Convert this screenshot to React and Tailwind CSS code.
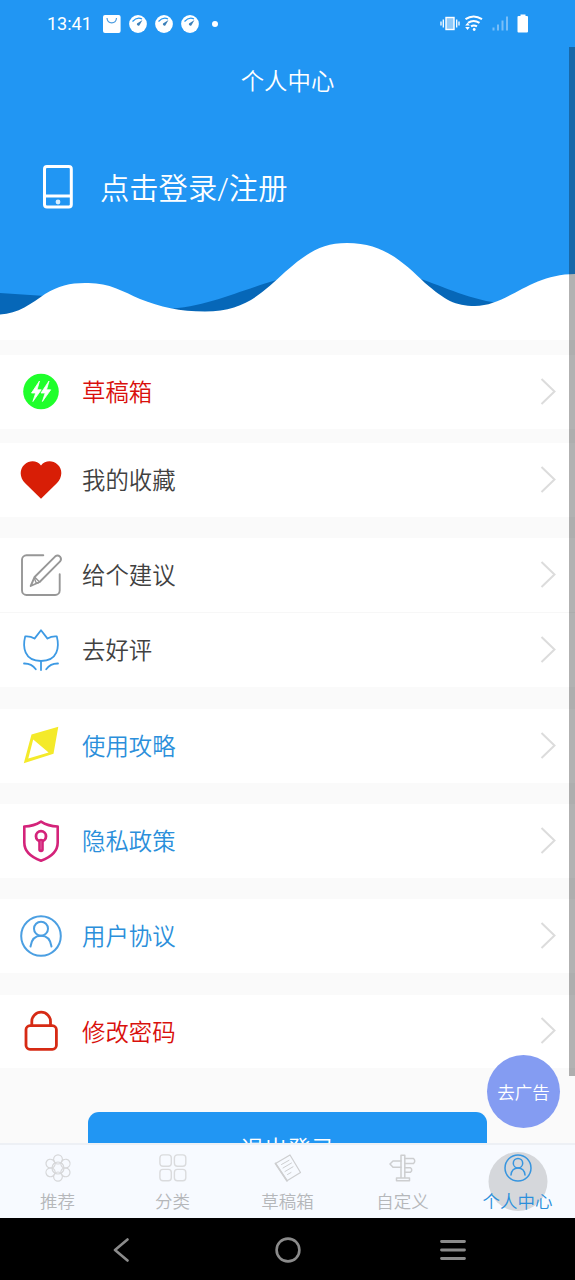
import React, { useState } from 'react';

const FONT = "font-['Roboto','Noto_Sans_CJK_SC',sans-serif]";

const line = { fill: 'none', strokeLinecap: 'round', strokeLinejoin: 'round' };

/* ---- Menu icons, all on a 48px box ---- */
const BoltIcon = () => (
  <>
    <circle cx="24" cy="23.5" r="17.8" fill="#1fff2b" />
    <path
      fill="#fff"
      stroke="#fff"
      strokeWidth="0.8"
      strokeLinejoin="round"
      d="M22.500 13L14.500 25h4.200L15.900 33.500 24.200 21.800h-4.200zM32 13L24 25H28.200l-2.800 8.500 8.300-11.700h-4.200z"
    />
  </>
);

const HeartIcon = () => (
  <path
    fill="#d81e06"
    d="M24 42.8L8.2 27.2C2.2 21 2.4 13 7.6 8.4C12.6 4 20 4.3 24 9.4C28 4.3 35.5 4 40.5 8.4C45.7 13 45.8 21 39.8 27.2Z"
  />
);

const EditIcon = () => (
  <g {...line} stroke="#979797" strokeWidth="1.9">
    <path d="M26.3 4.3H9.5A4.5 4.5 0 0 0 5 8.8V39.5A4.5 4.5 0 0 0 9.5 44H38.2A4.5 4.5 0 0 0 42.7 39.5V23.3" />
    <path d="M13.7 35L17.6 26 38.3 5.3Q40.7 3.4 43 5.6Q45 8 43.1 10.4L22.6 31Z" />
    <path d="M17.6 26L22.6 31M17.5 27.5L19 31.5 21 32" strokeWidth="1.4" />
  </g>
);

const TulipIcon = () => (
  <g {...line} stroke="#3d9ae4" strokeWidth="1.8">
    <path d="M24 4.2L17.5 12.6Q13 9.8 8.2 10.4C5.5 21 7 35 24 35C41 35 42.5 21 39.8 10.4Q35 9.8 30.5 12.6Z" />
    <path d="M24 35V44M7 37.5Q14.5 37.3 18.8 43.2M41 37.5Q33.5 37.3 29.2 43.2" />
  </g>
);

const CompassIcon = () => (
  <path
    fill="#f4ea2a"
    fillRule="evenodd"
    d="M41.3 4.8L14.5 12.6 6.8 41.2 36.5 31.7ZM16.2 17.4L11.3 36.5 31.6 30.4Z"
  />
);

const ShieldIcon = () => (
  <g {...line} stroke="#d4237a">
    <path
      strokeWidth="2.6"
      d="M24 4.6Q31 9.2 40.7 9.5V25.5C40.7 35 33 40.5 24 43.7C15 40.5 7.3 35 7.3 25.5V9.5Q17 9.2 24 4.6Z"
    />
    <circle cx="24" cy="19.2" r="5" strokeWidth="2.8" />
    <path d="M24 24.5V32.5" strokeWidth="5.6" />
    <path d="M24 24.5V32" strokeWidth="1" stroke="#e06aa5" />
  </g>
);

const UserIcon = () => (
  <g {...line} stroke="#4b9fe2" strokeWidth="2">
    <circle cx="24" cy="24" r="19.8" />
    <circle cx="24" cy="16.7" r="7" />
    <path d="M13.5 34.5C14.5 27.5 18.5 23.8 24 23.8S33.5 27.5 34.5 34.5" />
  </g>
);

const LockIcon = () => (
  <g {...line} stroke="#d62a14" strokeWidth="2.8">
    <rect x="9" y="18.7" width="30.4" height="23.6" rx="4" />
    <path d="M14.8 18.5V14.5A9.3 9.3 0 0 1 33.5 14.5V18.5" />
  </g>
);

/* ---- Tab icons, all on a 28px box ---- */
const FlowerTab = () => (
  <g {...line} stroke="#d6d7d9" strokeWidth="1.2">
    <circle cx="14" cy="14" r="6" />
    {[0, 60, 120, 180, 240, 300].map((deg) => (
      <ellipse key={deg} cx="14" cy="5.4" rx="4.4" ry="4.6" transform={`rotate(${deg} 14 14)`} />
    ))}
  </g>
);

const GridTab = () => (
  <g {...line} stroke="#dadbdd" strokeWidth="1.4">
    <rect x="0.9" y="0.9" width="11.4" height="11.4" rx="3" />
    <rect x="15.4" y="0.9" width="11.4" height="11.4" rx="3" />
    <rect x="0.9" y="15.4" width="11.4" height="11.4" rx="3" />
    <rect x="15.4" y="15.4" width="11.4" height="11.4" rx="3" />
  </g>
);

const NoteTab = () => (
  <g {...line} stroke="#cdced0" strokeWidth="1.2">
    <path d="M1.5 9.5L16 1 26.5 18.5 13 26.8Z" />
    <path d="M1.5 9.5L13 26.8" strokeWidth="1.8" />
    <path d="M7.5 10.5L15 6.3M9 14L17.500 9M11 17.500L19 12.800M13.500 20.500L17 18.500" strokeWidth="1" />
  </g>
);

const SignTab = () => (
  <g {...line} stroke="#cdced0" strokeWidth="1.5">
    <path d="M12 24V1.2H15.8V24M7.5 24H20.500V26.8H7.500Z" />
    <path d="M15.8 4.5H24.5Q27 6.8 24.5 9.5H15.8M12 7H4L1 10 4 13.2H12M15.8 13.8H21.5Q24 16 21.5 18.2H15.8" />
  </g>
);

const UserTab = () => (
  <g {...line} stroke="#3795df" strokeWidth="1.5">
    <circle cx="14" cy="14" r="13" />
    <circle cx="14" cy="9.2" r="4.7" />
    <path d="M7 21C7.5 16.5 10 14 14 14S20.5 16.5 21 21" />
  </g>
);

const GROUPS = [
  {
    gap: 'mt-[15px]',
    items: [{ label: '草稿箱', color: 'text-[#d9100c]', icon: BoltIcon }],
  },
  {
    gap: 'mt-[14.5px]',
    items: [{ label: '我的收藏', color: 'text-[#414141]', icon: HeartIcon }],
  },
  {
    gap: 'mt-[21.5px]',
    items: [
      { label: '给个建议', color: 'text-[#414141]', icon: EditIcon },
      { label: '去好评', color: 'text-[#414141]', icon: TulipIcon },
    ],
  },
  {
    gap: 'mt-[22px]',
    items: [{ label: '使用攻略', color: 'text-[#2b8fdb]', icon: CompassIcon }],
  },
  {
    gap: 'mt-[21.5px]',
    items: [{ label: '隐私政策', color: 'text-[#2b8fdb]', icon: ShieldIcon }],
  },
  {
    gap: 'mt-[21.5px]',
    items: [{ label: '用户协议', color: 'text-[#2b8fdb]', icon: UserIcon }],
  },
  {
    gap: 'mt-[22px]',
    items: [{ label: '修改密码', color: 'text-[#d9100c]', icon: LockIcon }],
  },
];

const TABS = [
  { label: '推荐', icon: FlowerTab },
  { label: '分类', icon: GridTab },
  { label: '草稿箱', icon: NoteTab },
  { label: '自定义', icon: SignTab },
  { label: '个人中心', icon: UserTab },
];

function Gauge() {
  return (
    <svg className="w-[18px] h-[18px]" viewBox="0 0 18 18" fill="none">
      <circle cx="9" cy="9" r="8.9" fill="#fff" />
      <path d="M3.5 6.5Q8 1.5 13 4" stroke="#2196f3" strokeWidth="1.2" />
      <path d="M13.5 5L10.3 10.5A1.6 1.6 0 0 1 8 8.5Z" fill="#3b7fb8" />
    </svg>
  );
}

function StatusBar() {
  return (
    <div className="h-[47px] shrink-0 flex items-center justify-between px-[47px] text-white">
      <div className="flex items-center gap-2">
        <span className="w-[48px] text-[18px] leading-none">13:41</span>
        <svg className="w-[18px] h-[18px]" viewBox="0 0 18 18" fill="none">
          <rect width="17.6" height="18" rx="2" fill="#fff" />
          <path d="M4 3C4.5 9.5 13 9.5 13.5 3" stroke="#4a9be0" strokeWidth="1.2" />
        </svg>
        <Gauge />
        <Gauge />
        <Gauge />
        <span className="w-[6px] h-[6px] rounded-full bg-white ml-[5px]" />
      </div>
      <svg className="w-[88px] h-[20px]" viewBox="0 0 88 20" fill="none">
        {/* vibrate */}
        <rect x="6" y="3.5" width="8" height="12" fill="#8fc9f8" stroke="#fff" strokeWidth="1.4" />
        <path d="M3.3 5.5V13.5M1 7.5V11.5M16.7 5.5V13.5M19 7.5V11.5" stroke="#fff" strokeWidth="1.3" />
        {/* wifi */}
        <path
          d="M25.5 5.2Q33.5 -0.2 42 5.2M28 8.9Q33.5 4.9 39.5 8.9M31 12.4Q33.7 10.4 37 12.4"
          stroke="#fff"
          strokeWidth="2"
        />
        <circle cx="34.2" cy="15.5" r="1.4" fill="#fff" />
        <path d="M25.2 11.5L27.5 8.8 29.8 11.5ZM25.2 13L27.5 16 29.8 13Z" fill="#fff" />
        {/* signal */}
        <path d="M53.5 13.5V16.5M58 10.5V16.5M62.5 6.5V16.5M67 2.5V16.5" stroke="#79bef8" strokeWidth="2" />
        {/* battery */}
        <path
          d="M80.5 0.5H85.5V2H87Q88 2 88 3V17.5Q88 18.5 87 18.5H78.5Q77.5 18.5 77.5 17.5V3Q77.5 2 78.5 2H80.5Z"
          fill="#fff"
        />
      </svg>
    </div>
  );
}

function Header() {
  return (
    <header className="h-[340px] flex flex-col bg-[#2196f3] text-white">
      <StatusBar />
      <h1 className="h-[66px] shrink-0 text-center text-[23.4px] leading-[71px] font-[350]">个人中心</h1>
      <button className="h-[119px] shrink-0 flex items-center gap-[27px] pl-[43px] pt-[28px] text-left">
        <svg className="w-[30px] h-[44px]" viewBox="0 0 30 44" fill="none">
          <rect x="1.5" y="1.5" width="26.8" height="40.6" rx="2.5" stroke="#fff" strokeWidth="3" />
          <path d="M1.5 31H28.5" stroke="#fff" strokeWidth="3" />
          <circle cx="15" cy="37" r="2.4" fill="#d8eefd" />
        </svg>
        <span className="pt-[6px] text-[29.3px] leading-none font-[350]">点击登录/注册</span>
      </button>
      <svg className="w-full h-[108px] shrink-0" viewBox="0 232 575 108">
        <path
          fill="#0667b8"
          d="M0 293L45 296V320H0ZM165 309.5C210 306 238 291 280 279V320H165ZM418 278C445 287 470 300 505 304V315H418Z"
        />
        <path
          fill="#fff"
          d="M0 314.5C18 314 32 303 45 294C58 286 70 283 85 283C108 282 122 291 140 299C160 307 180 311.5 205 311.5C245 311.5 262 293 285 272C308 252 322 243 347 243C385 243 405 264 425 283C445 300 455 306 475 306C507 306 530 274 575 274V340H0Z"
        />
      </svg>
    </header>
  );
}

function MenuRow({ item, divided }) {
  const Icon = item.icon;
  return (
    <button
      className={`w-full flex items-center pl-[17px] pr-[19px] bg-white ${
        divided ? 'h-[75.5px] border-t border-[#f7f7f7]' : 'h-[73.5px]'
      }`}
    >
      <svg className="w-12 h-12" viewBox="0 0 48 48">
        <Icon />
      </svg>
      <span className={`ml-[17px] pt-[4px] text-[23.4px] leading-none font-[350] ${item.color}`}>
        {item.label}
      </span>
      <svg className="w-[16px] h-[28px] ml-auto" viewBox="0 0 16 28" fill="none">
        <path d="M1.5 1L14.5 13.5 1.5 26" stroke="#dcdcdc" strokeWidth="2" />
      </svg>
    </button>
  );
}

function TabBar({ active, onChange }) {
  return (
    <nav className="h-[75px] shrink-0 grid grid-cols-5 bg-[#f7faff] border-t-2 border-[#edf0f5]">
      {TABS.map((tab, i) => {
        const Icon = tab.icon;
        return (
          <button
            key={tab.label}
            onClick={() => onChange(i)}
            className="relative flex flex-col items-center pt-[9px]"
          >
            {i === active && (
              <span className="absolute left-1/2 top-[7px] -translate-x-1/2 w-[59px] h-[59px] rounded-full bg-[#d5d7db]" />
            )}
            <svg className="relative w-7 h-7" viewBox="0 0 28 28">
              <Icon />
            </svg>
            <span
              className={`relative mt-[12px] text-[17.5px] leading-none font-[350] whitespace-nowrap ${
                i === active ? 'text-[#2b8fdb]' : 'text-[#b5b7ba]'
              }`}
            >
              {tab.label}
            </span>
          </button>
        );
      })}
    </nav>
  );
}

function SystemNav() {
  return (
    <div className="h-[62px] shrink-0 bg-black flex items-center pt-[1px] pl-[112px]">
      <svg className="w-[18px] h-[24px]" viewBox="0 0 18 24" {...line} stroke="#8b8b8b" strokeWidth="2.6">
        <path d="M15.5 1.5L3 12 15.5 22.5" />
      </svg>
      <svg className="w-[26px] h-[26px] ml-[145px]" viewBox="0 0 26 26" {...line} stroke="#8b8b8b" strokeWidth="2.6">
        <circle cx="13" cy="13" r="11.4" />
      </svg>
      <svg className="w-[26px] h-[22px] ml-[139px]" viewBox="0 0 26 22" {...line} stroke="#8b8b8b" strokeWidth="2.8">
        <path d="M1.5 2.5H24.5M1.5 11H24.5M1.5 19.5H24.5" />
      </svg>
    </div>
  );
}

export default function App() {
  const [active, setActive] = useState(4);

  return (
    <div lang="zh-CN" className={`relative w-[575px] h-[1280px] flex flex-col overflow-hidden bg-[#fafafa] ${FONT}`}>
      <main className="h-[1143px] shrink-0 overflow-hidden">
        <Header />
        {GROUPS.map((group) => (
          <section key={group.items[0].label} className={group.gap}>
            {group.items.map((item, i) => (
              <MenuRow key={item.label} item={item} divided={i > 0} />
            ))}
          </section>
        ))}
        <button className="mt-[44px] ml-[88px] w-[399px] h-[78px] rounded-[11px] bg-[#2196f3] text-white text-[23.4px] font-[350]">
          退出登录
        </button>
      </main>

      <TabBar active={active} onChange={setActive} />
      <SystemNav />

      {/* Scroll indicator */}
      <div className="absolute right-0 top-[47px] w-[6px] h-[1029px] bg-black/30" />

      {/* Floating remove-ads button */}
      <button className="absolute left-[487px] top-[1055px] w-[73px] h-[73px] pt-[3px] rounded-full bg-[#849cf2] text-white text-[17.5px] font-[350]">
        去广告
      </button>
    </div>
  );
}
